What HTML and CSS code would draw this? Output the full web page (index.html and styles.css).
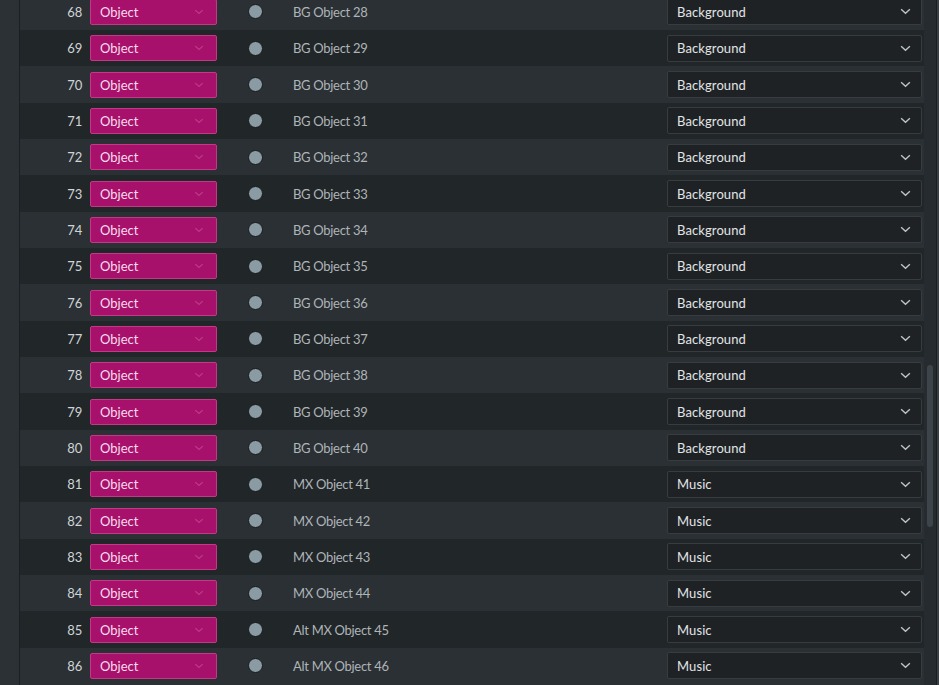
FILE: index.html
```html
<!DOCTYPE html>
<html>
<head>
<meta charset="utf-8">
<link rel="stylesheet" href="styles.css">
</head>
<body>
<div class="app">
  <div class="gutter"></div>
  <div class="list" id="list"></div>
  <div class="scroll"><div class="thumb"></div></div>
  <div class="edge"></div>
</div>
<script>
  const rows = [];
  for (let n = 68; n <= 86; n++) {
    let name, cat;
    if (n <= 80) { name = 'BG Object ' + (n - 40); cat = 'Background'; }
    else if (n <= 84) { name = 'MX Object ' + (n - 40); cat = 'Music'; }
    else { name = 'Alt MX Object ' + (n - 40); cat = 'Music'; }
    rows.push({n, name, cat});
  }
  const chev = '<svg class="chev" viewBox="0 0 12 8" width="11" height="7"><path d="M1 1.5 L6 6 L11 1.5" fill="none" stroke="currentColor" stroke-width="1.6"/></svg>';
  const list = document.getElementById('list');
  list.innerHTML = rows.map((r, i) => `
    <div class="row ${i % 2 ? 'dark' : 'light'}">
      <span class="num">${r.n}</span>
      <div class="type">Object ${chev}</div>
      <span class="dot"></span>
      <span class="name">${r.name}</span>
      <div class="cat">${r.cat} ${chev}</div>
    </div>`).join('');
</script>
</body>
</html>
```
FILE: styles.css
```css
html, body {
  margin: 0;
  padding: 0;
  background: #2a3034;
  overflow: hidden;
}
.app {
  display: flex;
  width: 939px;
  height: 685px;
  font-family: Lato, "Open Sans", sans-serif;
  font-size: 13px;
}
.gutter {
  width: 19px;
  flex: none;
  background: #2b3135;
  border-right: 1px solid #1b1f22;
}
.list {
  flex: 1;
  margin-top: -6.2px;
  display: flex;
  flex-direction: column;
}
.row {
  height: 36.333px;
  flex: none;
  display: flex;
  align-items: center;
  box-sizing: border-box;
}
.row.light { background: #2a3034; }
.row.dark { background: #212629; }
.num {
  width: 62px;
  text-align: right;
  color: #d0d4d7;
  flex: none;
  letter-spacing: -0.2px;
}
.type {
  margin-left: 8px;
  width: 127px;
  height: 26px;
  box-sizing: border-box;
  background: #a8116b;
  border: 1px solid #c23a86;
  border-radius: 2px;
  display: flex;
  align-items: center;
  justify-content: space-between;
  padding: 0 12px 0 9px;
  color: #f6dcec;
  flex: none;
}
.type .chev { color: #bd3c86; width: 10px; height: 6px; }
.dot {
  margin-left: 31px;
  width: 13px;
  height: 13px;
  border-radius: 50%;
  background: #8b9ba4;
  border: 1px solid #161a1c;
  flex: none;
}
.name {
  margin-left: 30px;
  color: #aeb4b8;
  flex: 1;
  letter-spacing: -0.3px;
}
.cat {
  width: 255px;
  height: 27px;
  box-sizing: border-box;
  background: #1e2225;
  border: 1px solid #363c40;
  border-radius: 2px;
  display: flex;
  align-items: center;
  justify-content: space-between;
  padding: 0 10px 0 9px;
  color: #e2e5e7;
  margin-right: 2px;
  flex: none;
  letter-spacing: 0.1px;
}
.cat .chev { color: #bfc4c8; }
.scroll {
  width: 12px;
  flex: none;
  background: #262b2f;
  position: relative;
}
.thumb {
  position: absolute;
  left: 3px;
  width: 6px;
  top: 365px;
  height: 162px;
  background: #3d454a;
  border-radius: 3px;
}
.edge {
  width: 2px;
  flex: none;
  background: #3b4044;
  border-left: 1px solid #1a1e21;
}
```
